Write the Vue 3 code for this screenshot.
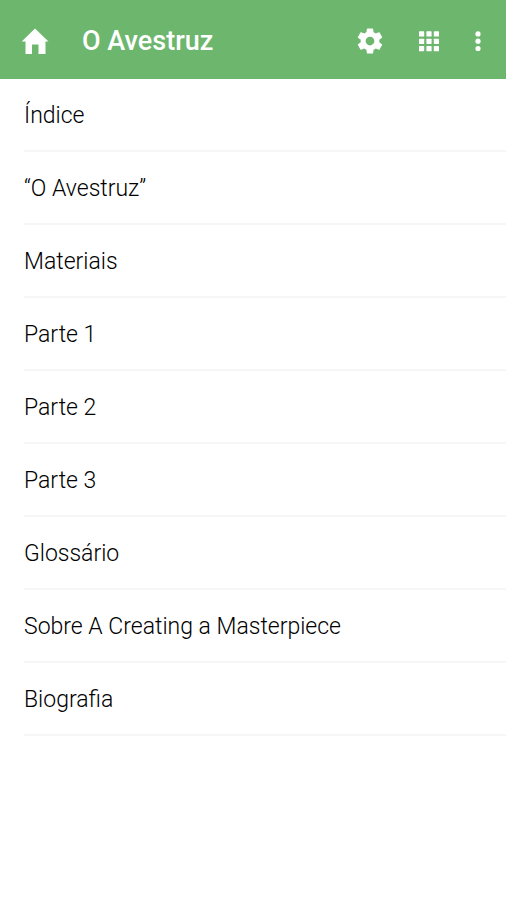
<script setup>
const items = [
  'Índice',
  '“O Avestruz”',
  'Materiais',
  'Parte 1',
  'Parte 2',
  'Parte 3',
  'Glossário',
  'Sobre A Creating a Masterpiece',
  'Biografia',
]
</script>

<template>
  <div class="page">
    <header class="bar">
      <button class="icon-button" type="button" aria-label="Home">
        <svg class="icon" viewBox="0 0 30 30"><path d="M15 2.500 1.700 15.500H5.500V28H12V18.500H18.500V28H25.500V15.500H28.500z" /></svg>
      </button>
      <h1 class="title">O Avestruz</h1>
      <div class="actions">
        <button class="icon-button" type="button" aria-label="Settings">
          <svg class="icon" viewBox="0 0 24 24"><path d="M19.43 12.98c.04-.32.07-.64.07-.98s-.03-.66-.07-.98l2.11-1.65c.19-.15.24-.42.12-.64l-2-3.46c-.12-.22-.39-.3-.61-.22l-2.49 1c-.52-.4-1.08-.73-1.69-.98l-.38-2.65C14.46 2.18 14.25 2 14 2h-4c-.25 0-.46.18-.49.42l-.38 2.65c-.61.25-1.17.59-1.69.98l-2.49-1c-.23-.09-.49 0-.61.22l-2 3.46c-.13.22-.07.49.12.64l2.11 1.65c-.04.32-.07.65-.07.98s.03.66.07.98l-2.11 1.65c-.19.15-.24.42-.12.64l2 3.46c.12.22.39.3.61.22l2.49-1c.52.4 1.08.73 1.69.98l.38 2.65c.03.24.24.42.49.42h4c.25 0 .46-.18.49-.42l.38-2.65c.61-.25 1.17-.59 1.69-.98l2.49 1c.23.09.49 0 .61-.22l2-3.46c.12-.22.07-.49-.12-.64l-2.11-1.65zM12 15.500c-1.930 0-3.500-1.570-3.500-3.500s1.570-3.500 3.500-3.500 3.500 1.570 3.500 3.500-1.570 3.500-3.500 3.500z" /></svg>
        </button>
        <button class="icon-button" type="button" aria-label="Apps">
          <svg class="icon" viewBox="0 0 30 30">
            <template v-for="y in 3" :key="y">
              <rect v-for="x in 3" :key="x" :x="x * 7.400 - 2.400" :y="y * 7.400 - 2.100" width="5.200" height="5.200" rx="0.600" />
            </template>
          </svg>
        </button>
        <button class="icon-button narrow" type="button" aria-label="More options">
          <svg class="icon" viewBox="0 0 30 30"><circle cx="15" cy="7.900" r="2.600" /><circle cx="15" cy="15.200" r="2.600" /><circle cx="15" cy="22.500" r="2.600" /></svg>
        </button>
      </div>
    </header>
    <nav>
      <ul class="list">
        <li v-for="item in items" :key="item" class="row">
          <a class="link" href="#">{{ item }}</a>
        </li>
      </ul>
    </nav>
  </div>
</template>

<style>
body {
  background: #fff;
}
</style>

<style scoped>
.page {
  min-height: 100vh;
  background: #fff;
  font-family: Roboto, 'Liberation Sans', sans-serif;
}
.bar {
  display: flex;
  align-items: center;
  box-sizing: border-box;
  height: 79px;
  padding: 3px 8px 0 5px;
  background: #6cb66e;
  color: #fff;
}
.icon-button {
  display: flex;
  align-items: center;
  justify-content: center;
  width: 59px;
  height: 56px;
  padding: 0;
  border: 0;
  background: none;
  color: inherit;
  cursor: pointer;
}
.icon-button.narrow {
  width: 40px;
}
.icon {
  width: 30px;
  height: 30px;
  fill: currentColor;
}
.title {
  flex: 1;
  margin: 0 0 0 18px;
  font-size: 27px;
  font-weight: 500;
  line-height: 34px;
}
.actions {
  display: flex;
}
.list {
  margin: 0;
  padding: 0 0 0 24px;
  list-style: none;
}
.row {
  border-bottom: 2px solid #f6f6f6;
}
.link {
  display: block;
  padding: 23px 0 20px;
  color: #000;
  font-size: 23px;
  font-weight: 350;
  line-height: 28px;
  text-decoration: none;
}
</style>
